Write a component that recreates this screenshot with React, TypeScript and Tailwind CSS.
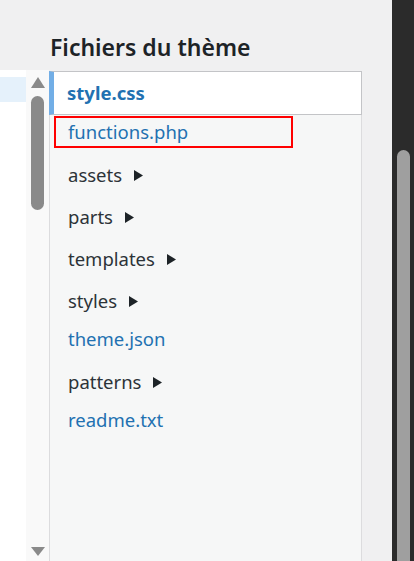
const FONT = { fontFamily: '"Noto Sans", "Open Sans", "Liberation Sans", sans-serif' };

type Item = { name: string; type: 'file' | 'folder'; active?: boolean; marked?: boolean };

const ITEMS: Item[] = [
    { name: 'functions.php', type: 'file', marked: true },
    { name: 'assets', type: 'folder' },
    { name: 'parts', type: 'folder' },
    { name: 'templates', type: 'folder' },
    { name: 'styles', type: 'folder' },
    { name: 'theme.json', type: 'file' },
    { name: 'patterns', type: 'folder' },
    { name: 'readme.txt', type: 'file' },
];

function Caret() {
    return (
        <svg width="9" height="11" viewBox="0 0 9 11" className="ml-[12px] shrink-0">
            <path d="M0 0 L9 5.5 L0 11 Z" fill="#1d2327" />
        </svg>
    );
}

function EditorScrollbar() {
    return (
        <div className="w-[23px] bg-[#f9f9f9] flex flex-col items-center">
            {/* up arrow */}
            <svg width="14" height="11" viewBox="0 0 14 11" className="mt-[7px]">
                <path d="M7 0 L14 11 L0 11 Z" fill="#8a8a8a" />
            </svg>
            <div className="mt-[8px] w-[13px] h-[114px] rounded-full bg-[#8a8a8a]" />
            <div className="flex-1" />
            <svg width="14" height="9" viewBox="0 0 14 9" className="mb-[5px]">
                <path d="M0 0 L14 0 L7 9 Z" fill="#8a8a8a" />
            </svg>
        </div>
    );
}

export default function App() {
    return (
        <div className="w-[414px] h-[561px] bg-[#f0f0f1] flex overflow-hidden" style={FONT}>
            {/* code editor edge */}
            <div className="w-[49px] flex flex-col">
                <div className="h-[70px]" />
                <div className="flex-1 flex">
                    <div className="w-[26px] bg-white">
                        <div className="mt-[7px] h-[25px] bg-[#e5f1fb]" />
                    </div>
                    <EditorScrollbar />
                </div>
            </div>

            {/* theme files */}
            <div className="w-[313px] flex flex-col">
                <div className="h-[71px] flex items-end pl-[1px] pb-[12px]">
                    <h2 className="text-[23px] leading-none font-semibold text-[#1d2327]">Fichiers du thème</h2>
                </div>
                <div className="flex-1 border-x border-[#dcdcde] bg-[#f6f7f7]">
                    <div className="-mx-px h-[44px] flex items-center bg-white border border-[#c3c4c7] border-l-[5px] border-l-[#72aee6] pl-[13px]">
                        <span className="text-[18.5px] font-bold text-[#2271b1]">style.css</span>
                    </div>
                    <ul>
                        {ITEMS.map((item) =>
                            item.type === 'folder' ? (
                                <li key={item.name} className="h-[42px] flex items-center pl-[18px] text-[18.5px] text-[#2c3338]">
                                    {item.name}
                                    <Caret />
                                </li>
                            ) : (
                                <li key={item.name} className="h-[39px] pt-[1px]">
                                    <a
                                        className={
                                            item.marked
                                                ? 'ml-[4px] w-[239px] h-[32px] flex items-center border-2 border-[#ff0000] pl-[12px] text-[18.5px] text-[#2271b1]'
                                                : 'ml-[4px] h-[32px] flex items-center pl-[14px] text-[18.5px] text-[#2271b1]'
                                        }
                                    >
                                        {item.name}
                                    </a>
                                </li>
                            )
                        )}
                    </ul>
                </div>
            </div>

            <div className="w-[30px]" />

            {/* browser scrollbar */}
            <div className="w-[22px] bg-[#2b2b2b] flex flex-col">
                <div className="mt-[150px] ml-[5px] w-[13px] flex-1 rounded-t-full bg-[#9f9f9f]" />
            </div>
        </div>
    );
}
